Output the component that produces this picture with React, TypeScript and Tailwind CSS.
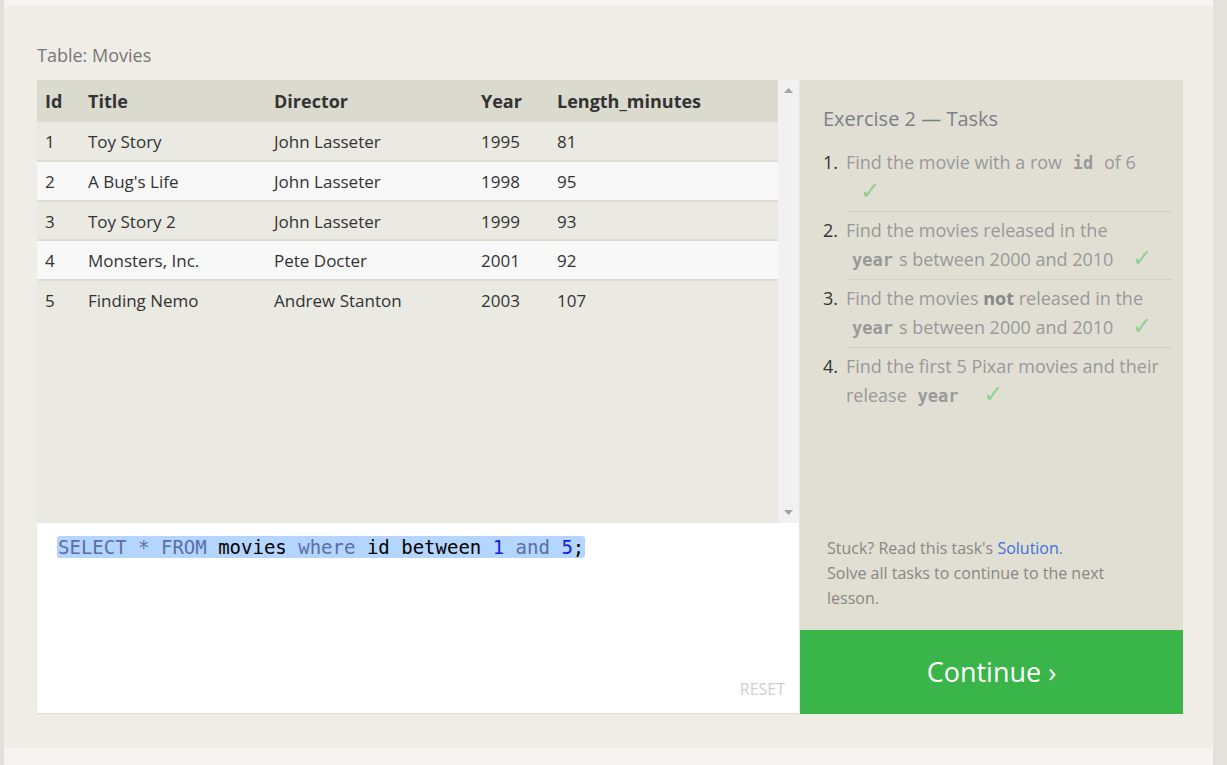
import React from "react";

const rows = [
  { id: 1, title: "Toy Story", director: "John Lasseter", year: 1995, length: 81 },
  { id: 2, title: "A Bug's Life", director: "John Lasseter", year: 1998, length: 95 },
  { id: 3, title: "Toy Story 2", director: "John Lasseter", year: 1999, length: 93 },
  { id: 4, title: "Monsters, Inc.", director: "Pete Docter", year: 2001, length: 92 },
  { id: 5, title: "Finding Nemo", director: "Andrew Stanton", year: 2003, length: 107 },
];

const Code = ({ children }: { children: React.ReactNode }) => (
  <code className="px-[6px] font-bold text-[#999] font-['DejaVu_Sans_Mono',monospace] text-[17px]">
    {children}
  </code>
);

const Check = () => (
  <span className="ml-[14px] font-['DejaVu_Sans',sans-serif] text-[24px] leading-none text-[#8fd18f]">✓</span>
);

function MoviesTable() {
  return (
    <div className="flex h-[443px] bg-[#eae9e2]">
      <div className="flex-1">
        <table className="w-full border-collapse text-left text-[#333]">
          <thead>
            <tr className="h-[42px] bg-[#dbdacf] text-[18px] font-bold">
              <th className="w-[43px] pl-[8px]">Id</th>
              <th className="w-[186px] pl-[8px]">Title</th>
              <th className="w-[207px] pl-[8px]">Director</th>
              <th className="w-[76px] pl-[8px]">Year</th>
              <th className="pl-[8px]">Length_minutes</th>
            </tr>
          </thead>
          <tbody className="text-[17px]">
            {rows.map((r, i) => (
              <tr
                key={r.id}
                className={
                  i % 2 === 1
                    ? "h-[40px] bg-[#f8f8f8] border-y-2 border-[#dedcd5]"
                    : "h-[39px]"
                }
              >
                <td className="pl-[8px] pt-[2px]">{r.id}</td>
                <td className="pl-[8px] pt-[2px]">{r.title}</td>
                <td className="pl-[8px] pt-[2px]">{r.director}</td>
                <td className="pl-[8px] pt-[2px]">{r.year}</td>
                <td className="pl-[8px] pt-[2px]">{r.length}</td>
              </tr>
            ))}
          </tbody>
        </table>
      </div>
      <div className="flex w-[21px] flex-col items-center justify-between bg-[#f1f1f1] py-[8px]">
        <svg width="9" height="5" viewBox="0 0 9 5">
          <path d="M4.5 0L9 5H0Z" fill="#a3a3a3" />
        </svg>
        <svg width="9" height="5" viewBox="0 0 9 5">
          <path d="M0 0H9L4.5 5Z" fill="#a3a3a3" />
        </svg>
      </div>
    </div>
  );
}

function Editor() {
  return (
    <div className="relative flex-1 border-b border-[#e2e0d9] bg-white px-[20px] pt-[13px]">
      <div className="inline-block rounded-[3px] bg-[#b4d5fe] px-[1px] font-['DejaVu_Sans_Mono',monospace] text-[19px] leading-[22px]">
        <span className="text-[#5a6eaa]">SELECT * FROM </span>
        <span className="text-black">movies </span>
        <span className="text-[#5a6eaa]">where </span>
        <span className="text-black">id between </span>
        <span className="text-[#1a1ae0]">1 </span>
        <span className="text-[#5a6eaa]">and </span>
        <span className="text-[#1a1ae0]">5</span>
        <span className="text-black">;</span>
      </div>
      <span className="absolute bottom-[12px] right-[14px] text-[16px] text-[#cfcfcf]">RESET</span>
    </div>
  );
}

function Tasks() {
  const items: React.ReactNode[] = [
    <>
      Find the movie with a row <Code>id</Code> of 6
      <br />
      <Check />
    </>,
    <>
      Find the movies released in the
      <br />
      <Code>year</Code>s between 2000 and 2010 <Check />
    </>,
    <>
      Find the movies <b className="text-[#888]">not</b> released in the
      <br />
      <Code>year</Code>s between 2000 and 2010 <Check />
    </>,
    <>
      Find the first 5 Pixar movies and their
      <br />
      release <Code>year</Code> <Check />
    </>,
  ];
  return (
    <div className="flex flex-1 flex-col bg-[#e1dfd4] pl-[23px] pr-[11px] pt-[26px]">
      <h2 className="text-[20px] leading-[26px] text-[#7b8087]">Exercise 2 — Tasks</h2>
      <ol className="mt-[16px]">
        {items.map((it, i) => (
          <li key={i} className="flex text-[18px] leading-[29px]">
            <span className="w-[23px] shrink-0 text-[#333]">{i + 1}.</span>
            <div
              className={
                i < items.length - 1
                  ? "flex-1 border-b border-[#d3d1c6] pb-[4px] mb-[4px] text-[#999]"
                  : "flex-1 text-[#999]"
              }
            >
              {it}
            </div>
          </li>
        ))}
      </ol>
      <div className="mt-auto pb-[19px] pl-[4px] text-[16px] leading-[25px] text-[#8a8783]">
        Stuck? Read this task's <span className="text-[#3b72d9]">Solution</span>.
        <br />
        Solve all tasks to continue to the next
        <br />
        lesson.
      </div>
    </div>
  );
}

export default function App() {
  return (
    <div className="flex h-[765px] w-[1227px] bg-[#f5f4f0] font-['Open_Sans',sans-serif]">
      <div className="w-[4px] bg-[#e2dfdc]" />
      <div className="w-[1209px] pt-[6px] pb-[17px]">
        <div className="h-full rounded-l-[4px] rounded-br-[4px] bg-[#efede6] pl-[33px] pr-[30px] pt-[39px]">
          <div className="mb-[14px] text-[18px] leading-[21px] text-[#777]">Table: Movies</div>
          <div className="flex h-[634px]">
            <div className="flex w-[763px] flex-col border-r border-[#e6e4dd]">
              <MoviesTable />
              <Editor />
            </div>
            <div className="flex w-[383px] flex-col">
              <Tasks />
              <button className="h-[84px] bg-[#3ab54a] text-[27px] text-white">Continue ›</button>
            </div>
          </div>
        </div>
      </div>
      <div className="flex-1 bg-[#e4e1dc]" />
    </div>
  );
}
